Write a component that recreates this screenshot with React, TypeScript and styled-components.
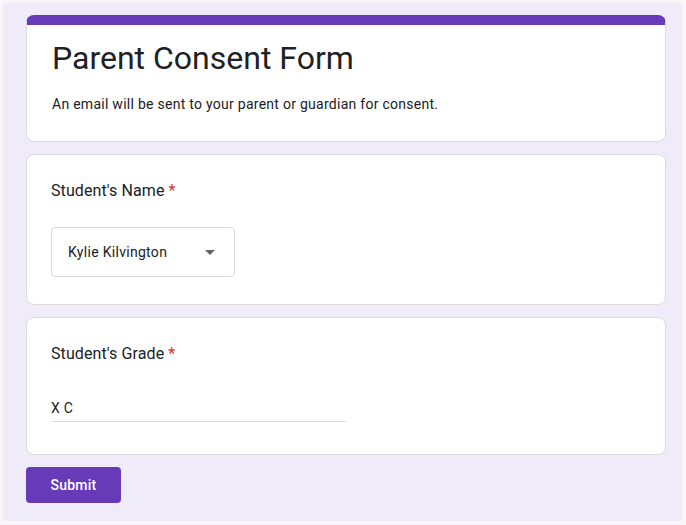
import React from "react";
import styled, { createGlobalStyle } from "styled-components";

const GlobalStyle = createGlobalStyle`
  html, body {
    margin: 0;
    padding: 0;
    background: #f7f7f9;
    font-family: Roboto, "Liberation Sans", Arial, sans-serif;
    color: #202124;
  }
`;

const Page = styled.div`
  margin: 3px;
  width: 679px;
  height: 518px;
  box-sizing: border-box;
  background: #f0ebf8;
  padding: 12px 0 0 23px;
  display: flex;
  flex-direction: column;
  gap: 12px;
`;

const Card = styled.div<{ $accent?: boolean }>`
  width: 640px;
  box-sizing: border-box;
  background: #fff;
  border: 1px solid #dadce0;
  border-radius: 8px;
  overflow: hidden;
  ${({ $accent }) => $accent && "border-top: 10px solid #673ab7;"}
`;

const HeaderBody = styled.div`
  padding: 13px 24px 27px 25px;
`;

const Title = styled.h1`
  margin: 0;
  font-size: 32px;
  font-weight: 400;
  line-height: 40px;
  color: #202124;
`;

const Description = styled.p`
  margin: 16px 0 0;
  font-size: 14px;
  line-height: 20px;
  letter-spacing: 0.27px;
  color: #202124;
`;

const QuestionBody = styled.div<{ $bottom: number }>`
  padding: 24px 24px ${({ $bottom }) => $bottom}px 24px;
`;

const Label = styled.div`
  font-size: 16px;
  line-height: 24px;
  letter-spacing: 0.1px;
  color: #202124;
`;

const Required = styled.span`
  color: #d93025;
  margin-left: 4px;
`;

const Select = styled.div`
  margin-top: 24px;
  width: 184px;
  height: 50px;
  box-sizing: border-box;
  border: 1px solid #dadce0;
  border-radius: 4px;
  display: flex;
  align-items: center;
  justify-content: space-between;
  padding: 0 19px 0 16px;
  font-size: 14px;
  letter-spacing: 0.3px;
  color: #202124;
`;

const Arrow = styled.span`
  width: 0;
  height: 0;
  border-left: 5px solid transparent;
  border-right: 5px solid transparent;
  border-top: 5px solid #5f6368;
`;

const TextInput = styled.div`
  margin-top: 23px;
  width: 295px;
  height: 33px;
  box-sizing: border-box;
  border-bottom: 1px solid #dadce0;
  display: flex;
  align-items: center;
  padding-top: 6px;
  font-size: 14px;
  letter-spacing: 0.3px;
  color: #202124;
`;

const SubmitButton = styled.button`
  width: 95px;
  height: 36px;
  border: none;
  border-radius: 4px;
  background: #673ab7;
  color: #fff;
  font-family: Roboto, "Liberation Sans", Arial, sans-serif;
  font-size: 14px;
  font-weight: 500;
  letter-spacing: 0.25px;
  cursor: pointer;
`;

export default function App() {
  return (
    <>
      <GlobalStyle />
      <Page>
        <Card $accent>
          <HeaderBody>
            <Title>Parent Consent Form</Title>
            <Description>
              An email will be sent to your parent or guardian for consent.
            </Description>
          </HeaderBody>
        </Card>
        <Card>
          <QuestionBody $bottom={27}>
            <Label>
              Student's Name<Required>*</Required>
            </Label>
            <Select>
              <span>Kylie Kilvington</span>
              <Arrow />
            </Select>
          </QuestionBody>
        </Card>
        <Card>
          <QuestionBody $bottom={32}>
            <Label>
              Student's Grade<Required>*</Required>
            </Label>
            <TextInput>X C</TextInput>
          </QuestionBody>
        </Card>
        <SubmitButton>Submit</SubmitButton>
      </Page>
    </>
  );
}
